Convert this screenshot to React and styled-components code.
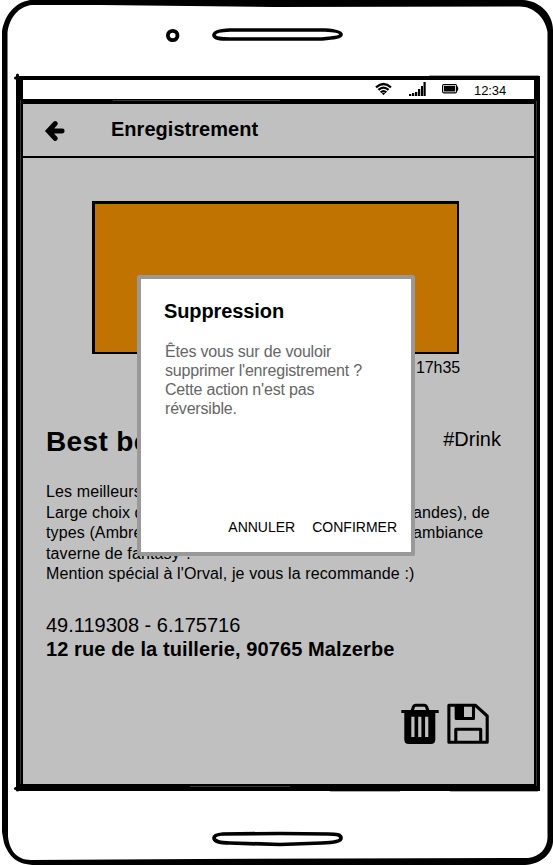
import React from "react";
import styled, { createGlobalStyle } from "styled-components";

const Global = createGlobalStyle`
  * { box-sizing: border-box; }
  html, body { margin: 0; background: #fff; }
  body { font-family: "Liberation Sans", Arial, sans-serif; color: #000; overflow: hidden; }
  h1, h2, h3, p { margin: 0; }
`;

const Phone = styled.div`
  position: relative;
  display: flex;
  flex-direction: column;
  width: 553px;
  height: 865px;
  padding: 76px 13px 74px 16px;
  overflow: hidden;
`;

const Outline = styled.svg`
  position: absolute;
  inset: 0;
  pointer-events: none;
`;

const Screen = styled.main`
  display: flex;
  flex-direction: column;
  flex: 1;
  border: solid #000;
  border-width: 4px 6px 7px 7px;
`;

const StatusBar = styled.div`
  display: flex;
  align-items: flex-start;
  height: 24px;
  padding: 2px 0 0 352px;
  border-bottom: 5px solid #000;
  background: #fff;
`;

const StatusIcon = styled.svg`
  flex: none;
  display: block;
  width: ${(p) => p.width}px;
  height: 16px;
  margin-right: ${(p) => p.$gap}px;
`;

const Clock = styled.span`
  padding-top: 1px;
  font-size: 13px;
  line-height: 15px;
  letter-spacing: -0.1px;
`;

const AppBar = styled.header`
  display: flex;
  align-items: center;
  height: 54px;
  padding-left: 21px;
  border-bottom: 2px solid #000;
  background: #c0c0c0;
`;

const BackIcon = styled.svg`
  display: block;
  width: 22px;
  height: 22px;
  margin: 2px 45px 0 0;
`;

const Title = styled.h1`
  font-size: 20px;
  line-height: 24px;
  letter-spacing: 0.03px;
  margin-top: -2px;
`;

const Content = styled.section`
  position: relative;
  flex: 1;
  display: flex;
  flex-direction: column;
  padding: 43px 33px 0 23px;
  background: #c0c0c0;
`;

const Photo = styled.div`
  width: 367px;
  height: 153px;
  margin-left: 46px;
  border: 2px solid #000;
  border-width: 3px 2px 2px 3px;
  background: #c07300;
`;

const Time = styled.p`
  align-self: flex-end;
  margin: 4px 41px 0 0;
  font-size: 16px;
  line-height: 20px;
  letter-spacing: -0.1px;
`;

const Heading = styled.div`
  display: flex;
  justify-content: space-between;
  height: 34px;
  margin-top: 47px;
`;

const Name = styled.h2`
  font-size: 28px;
  line-height: 34px;
  letter-spacing: 0.35px;
`;

const Tag = styled.span`
  font-size: 20px;
  line-height: 28px;
`;

const Description = styled.div`
  display: flex;
  flex-direction: column;
  margin-top: 23px;
  font-size: 16px;
  line-height: 20.5px;
  letter-spacing: 0.12px;
`;

const Line = styled.div`
  display: grid;
  grid-template-columns: 367px auto;
  white-space: nowrap;
`;

const Location = styled.div`
  margin-top: 28px;
  font-size: 20px;
  line-height: 24px;
`;

const Address = styled.p`
  font-weight: 700;
  letter-spacing: 0.1px;
`;

const Actions = styled.div`
  display: flex;
  justify-content: flex-end;
  gap: 8px;
  margin: 42px 12px 0 0;
`;

const ActionIcon = styled.svg`
  display: block;
  width: ${(p) => p.width}px;
  height: 42px;
`;

const Dialog = styled.div`
  position: absolute;
  left: 114px;
  top: 117px;
  display: flex;
  flex-direction: column;
  width: 278px;
  height: 281px;
  padding: 20px 14px 16px 23px;
  border: 4px solid #999;
  border-radius: 2px;
  background: #fff;
`;

const DialogTitle = styled.h3`
  font-size: 20px;
  line-height: 24px;
  letter-spacing: -0.1px;
`;

const Message = styled.p`
  margin: 19px 0 0 1px;
  color: #666;
  font-size: 16px;
  line-height: 19px;
  letter-spacing: -0.19px;
  white-space: pre-line;
`;

const Buttons = styled.div`
  display: flex;
  justify-content: flex-end;
  gap: 17px;
  margin-top: auto;
`;

const TextButton = styled.button`
  padding: 0;
  border: 0;
  background: none;
  color: #000;
  font: 14px/18px "Liberation Sans", Arial, sans-serif;
`;

const description = [
  ["Les meilleurs bières"],
  ["Large choix de bières", "andes), de"],
  ["types (Ambrée, blonde)", "ambiance"],
  ["taverne de fantasy ?"],
  ["Mention spécial à l'Orval, je vous la recommande :)"],
];

function PhoneOutline() {
  return (
    <Outline width="553" height="865" viewBox="0 0 553 865">
      <path
        fillRule="evenodd"
        d="M30 0H523C540 1 553 14 553 30V842C552 854 541 864 525 865H36C16 865 9 856 4 843L2 832V31C5 15 14 3 30 0ZM32 5C19 6 9 18 7.500 33L8 836C9 849 16 860 31 860L200 859L528 858C540 857 547 848 547.500 838V32C545 17 533 6 519 6.500L273 7L100 5Z"
      />
      <ellipse cx="172.700" cy="35.500" rx="4.800" ry="4.700" fill="none" stroke="#000" strokeWidth="3.800" />
      <g fill="none" stroke="#000" strokeWidth="3.700">
        <path d="M230 30C219 30.500 214 32 214 35C214 38 219 39 230 39L322 39C334 38 341 37 341 34.500C341 31.500 333 30.500 325 30Z" />
        <path d="M223 834C216 834.500 214 836 214 838C214 840.500 219 843 230 843L280 844.500L322 843C335 842.500 341 841 341 838C341 835 337 834 328 834L280 833.500Z" />
      </g>
      <path d="M17.500 75V80M15.500 78H20M17.500 786V790M15.500 788.500H20" stroke="#000" strokeWidth="3" strokeLinecap="round" />
      <g stroke="#383838" strokeWidth="1" fill="none">
        <path d="M20.500 100V784M536.500 101V786" />
        <path d="M113 100.500H280M190 786.500H290" />
      </g>
      <path d="M429 75.500H539M330 791.500H400M450 791.500H538" stroke="#aaa" />
    </Outline>
  );
}

function StatusIcons() {
  return (
    <>
      <StatusIcon width={17} $gap={17} viewBox="0 0 17 16">
        <g fill="none" stroke="#000" strokeWidth="2.200">
          <path d="M1 5.300Q8.500 -1.300 16 5.300M3.400 7.900Q8.500 3.300 13.600 7.900M5.700 10.400Q8.500 7.900 11.300 10.400" />
        </g>
        <path d="M6.800 11.300Q8.500 10 10.200 11.300L8.500 13.200Z" />
      </StatusIcon>
      <StatusIcon width={17} $gap={16} viewBox="0 0 17 16">
        <path d="M0 12H2.300V14H0ZM3 11H5.300V14H3ZM6 10H8.300V14H6ZM9 7H11.300V14H9ZM12 4H14V14H12ZM14.500 0H16.700V14H14.500Z" />
      </StatusIcon>
      <StatusIcon width={17} $gap={15} viewBox="0 0 17 16">
        <rect x="0.600" y="2.500" width="14" height="8.300" rx="1.200" fill="none" stroke="#000" strokeWidth="1.200" />
        <path d="M2 3.800H13.200V9.500H2ZM15 4Q16.300 4.500 16.300 6.600Q16.300 8.700 15 9.200Z" />
      </StatusIcon>
    </>
  );
}

function TrashIcon() {
  return (
    <ActionIcon width={38} viewBox="0 0 38 42">
      <path d="M0.300 8.500H37.700M11 8L12.500 3.800Q13 2.300 14.500 2.300H23.500Q25 2.300 25.500 3.800L27 8" fill="none" stroke="#000" strokeWidth="3.100" />
      <path
        fillRule="evenodd"
        d="M3.300 8.500H34.300V36.500Q34.300 41 29.800 41H7.800Q3.300 41 3.300 36.500ZM10.300 13.700V34H13.500V13.700ZM17.200 13.700V34H20.400V13.700ZM24.100 13.700V34H27.300V13.700Z"
      />
    </ActionIcon>
  );
}

function SaveIcon() {
  return (
    <ActionIcon width={42} viewBox="0 0 42 42">
      <g fill="none" stroke="#000" strokeWidth="3.100" strokeLinejoin="round">
        <path d="M1.900 2.300H28.500L40.200 13V39.300H1.900Z" />
        <path d="M9.200 2.500V15.500H26.500V2.500M8.800 39V26.200H33.700V39" />
      </g>
      <path d="M8 2H17V16H8Z" />
    </ActionIcon>
  );
}

function DeleteDialog() {
  return (
    <Dialog role="dialog">
      <DialogTitle>Suppression</DialogTitle>
      <Message>
        {"Êtes vous sur de vouloir\nsupprimer l'enregistrement ?\nCette action n'est pas\nréversible."}
      </Message>
      <Buttons>
        <TextButton>ANNULER</TextButton>
        <TextButton>CONFIRMER</TextButton>
      </Buttons>
    </Dialog>
  );
}

export default function App() {
  return (
    <>
      <Global />
      <Phone>
        <Screen>
          <StatusBar>
            <StatusIcons />
            <Clock>12:34</Clock>
          </StatusBar>
          <AppBar>
            <BackIcon viewBox="0 0 22 22">
              <path d="M11.300 3.500L4.300 11L11.300 18.500M5 11H18.200" fill="none" stroke="#000" strokeWidth="4.900" strokeLinecap="round" />
            </BackIcon>
            <Title>Enregistrement</Title>
          </AppBar>
          <Content>
            <Photo />
            <Time>17h35</Time>
            <Heading>
              <Name>Best beers</Name>
              <Tag>#Drink</Tag>
            </Heading>
            <Description>
              {description.map(([start, end]) => (
                <Line key={start}>
                  <span>{start}</span>
                  {end && <span>{end}</span>}
                </Line>
              ))}
            </Description>
            <Location>
              <p>49.119308 - 6.175716</p>
              <Address>12 rue de la tuillerie, 90765 Malzerbe</Address>
            </Location>
            <Actions>
              <TrashIcon />
              <SaveIcon />
            </Actions>
            <DeleteDialog />
          </Content>
        </Screen>
        <PhoneOutline />
      </Phone>
    </>
  );
}
